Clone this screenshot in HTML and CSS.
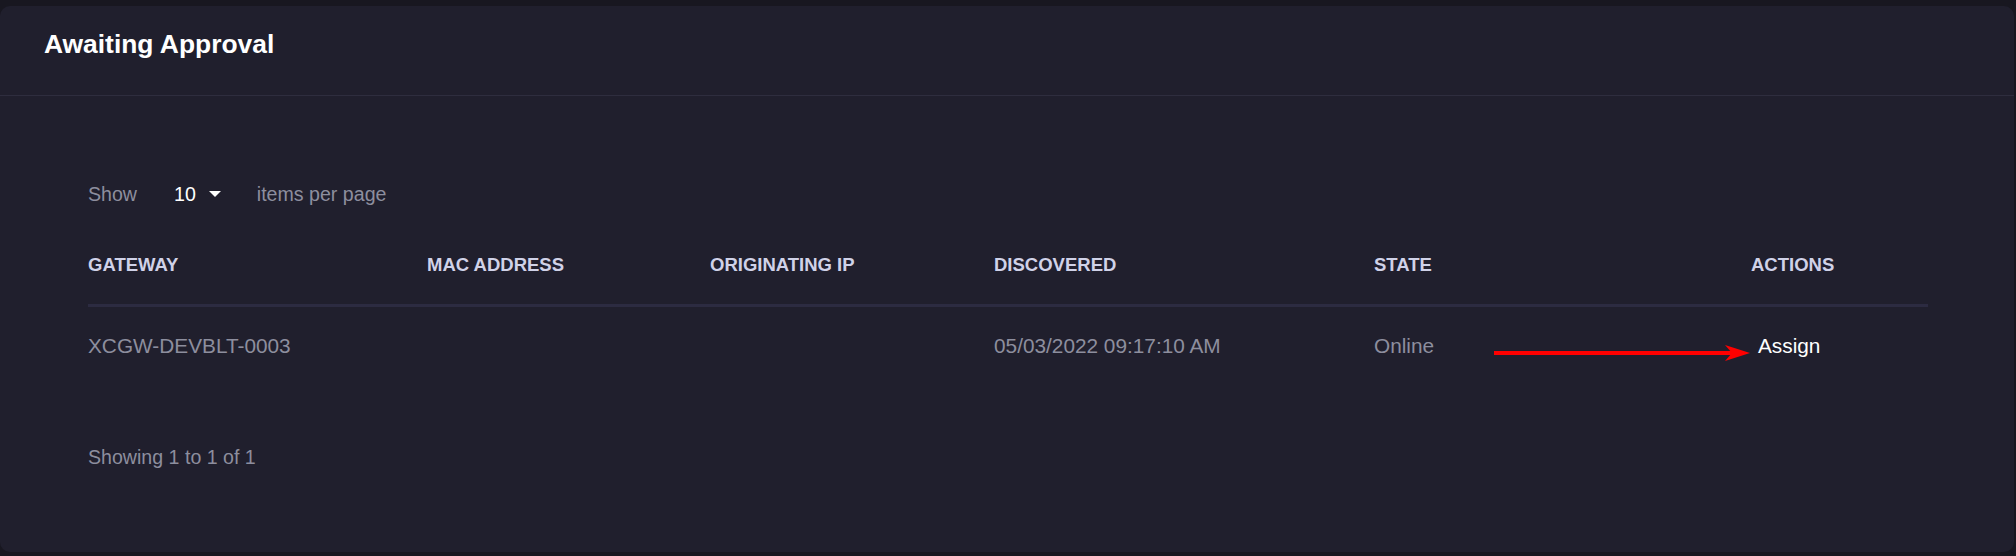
FILE: index.html
```html
<!DOCTYPE html>
<html lang="en">
<head>
<meta charset="utf-8">
<title>Awaiting Approval</title>
<link rel="stylesheet" href="styles.css">
</head>
<body>
  <section class="card">
    <header class="card-header">
      <h2 class="card-title">Awaiting Approval</h2>
    </header>
    <div class="card-body">
      <div class="toolbar">
        <span class="muted">Show</span>
        <span class="page-size">10 <span class="caret"></span></span>
        <span class="muted">items per page</span>
      </div>
      <div class="grid">
        <div class="th">GATEWAY</div>
        <div class="th">MAC ADDRESS</div>
        <div class="th">ORIGINATING IP</div>
        <div class="th">DISCOVERED</div>
        <div class="th">STATE</div>
        <div class="th">ACTIONS</div>
      </div>
      <div class="grid row">
        <div class="td">XCGW-DEVBLT-0003</div>
        <div class="td"></div>
        <div class="td"></div>
        <div class="td">05/03/2022 09:17:10 AM</div>
        <div class="td">Online</div>
        <div class="td"><button class="assign" type="button">Assign</button></div>
        <svg class="arrow" width="256" height="18" viewBox="0 0 256 18" aria-hidden="true">
          <rect x="0" y="7" width="240" height="4" fill="#f00"/>
          <polygon points="231,1 256,9 231,17 238,9" fill="#f00"/>
        </svg>
      </div>
      <div class="footer muted">Showing 1 to 1 of 1</div>
    </div>
  </section>
</body>
</html>
```

FILE: styles.css
```css
* { box-sizing: border-box; }

html, body {
  margin: 0;
  padding: 0;
  background: #181720;
  font-family: "Liberation Sans", Arial, sans-serif;
}

body {
  padding: 6px 2px 4px 0;
  height: 556px;
}

.card {
  background: #201f2d;
  border-radius: 10px;
  height: 546px;
}

.card-header {
  padding: 23px 44px 36px;
  border-bottom: 1px solid #2e2d3e;
}

.card-title {
  margin: 0;
  font-size: 26.4px;
  line-height: 30px;
  font-weight: 700;
  color: #ffffff;
}

.card-body {
  padding: 86px 86px 0 88px;
}

.toolbar {
  display: flex;
  align-items: center;
  font-size: 19.6px;
  line-height: 24px;
  margin-bottom: 47px;
}

.muted { color: #8d8e9e; }

.page-size {
  display: flex;
  align-items: center;
  color: #ffffff;
  margin: 0 36px 0 37px;
  gap: 13px;
}

.caret {
  width: 0;
  height: 0;
  border-left: 6px solid transparent;
  border-right: 6px solid transparent;
  border-top: 6px solid #ffffff;
}

.grid {
  display: grid;
  grid-template-columns: 339px 283px 284px 380px 377px 1fr;
  border-bottom: 3px solid #2c2b41;
}

.th {
  font-size: 18.5px;
  line-height: 24px;
  font-weight: 700;
  color: #d0d2e8;
  padding-bottom: 27px;
}

.row {
  position: relative;
  border-bottom: none;
}

.td {
  font-size: 20.8px;
  line-height: 24px;
  color: #8d8e9e;
  padding: 27px 0;
}

.assign {
  background: none;
  border: 0;
  padding: 0 0 0 7px;
  margin: 0;
  font: inherit;
  line-height: 24px;
  color: #ffffff;
  cursor: pointer;
}

.arrow {
  position: absolute;
  left: 1406px;
  top: 37px;
}

.footer {
  font-size: 19.6px;
  line-height: 24px;
  margin-top: 60px;
}
```
